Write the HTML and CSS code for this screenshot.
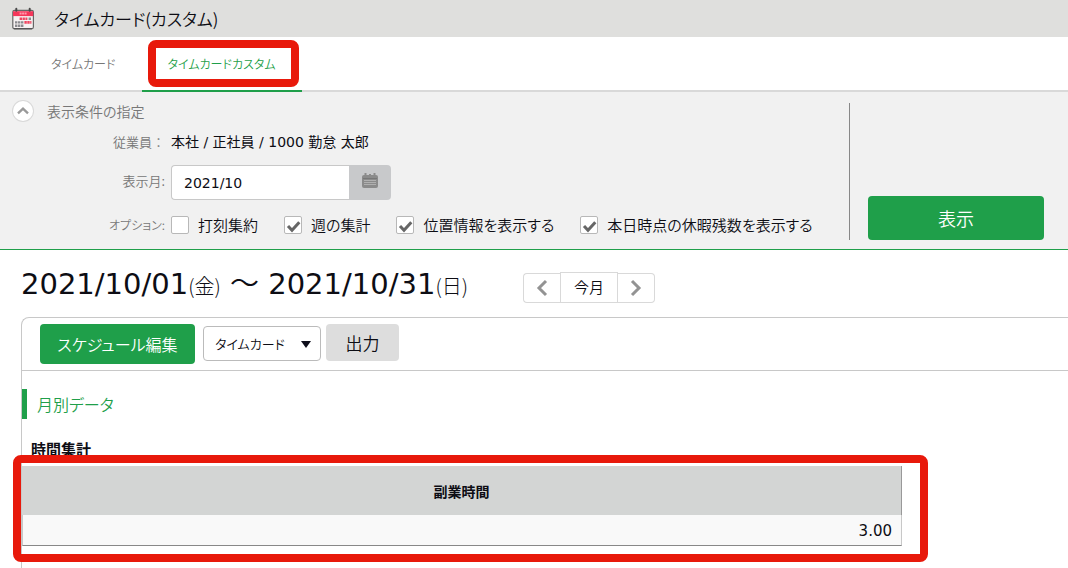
FILE: index.html
```html
<!DOCTYPE html>
<html lang="ja">
<head>
<meta charset="utf-8">
<meta name="viewport" content="width=device-width, initial-scale=1">
<title>タイムカード(カスタム)</title>
<link rel="stylesheet" href="styles.css">
</head>
<body>
<header class="page-header">
  <svg class="page-icon" viewBox="0 0 24 24" width="24" height="24" aria-hidden="true">
    <rect x="1.8" y="3.3" width="20.6" height="18.6" rx="1.8" fill="#f6f1f1" stroke="#666" stroke-width="1.2"/>
    <path d="M2 4.2h20.2v4.9H2z" fill="#f5365a"/>
    <path d="M8.6 6.5h7" stroke="#ff9aac" stroke-width="2" stroke-dasharray="2 .5"/>
    <path d="M5.3 1.8v2M18.7 1.8v2" stroke="#4a4a4a" stroke-width="2" stroke-linecap="round"/>
    <path d="M8.6 11.8h7.8M13.4 15.4h7" stroke="#ef4560" stroke-width="2.6" stroke-dasharray="2.4 .5"/>
    <path d="M17.6 11.8h2.4M4 15.4h8.4M4 18.8h8.4" stroke="#8a8a8e" stroke-width="2.4" stroke-dasharray="2.4 .6"/>
    <path d="M3 21.6h18" stroke="#555" stroke-width="1.2"/>
  </svg>
  <h1 class="page-title">タイムカード(カスタム)</h1>
</header>

<nav class="tabs">
  <a class="tab" href="#timecard">タイムカード</a>
  <a class="tab tab-active" href="#custom" aria-current="page">タイムカードカスタム</a>
</nav>

<form class="filters">
  <div class="conditions">
    <div class="conditions-head">
      <button class="collapse" type="button" aria-label="折りたたむ">
        <svg viewBox="0 0 20 20" width="20" height="20"><path d="M5 12.3l5-4.6 5 4.6" fill="none" stroke="#999" stroke-width="2.4"/></svg>
      </button>
      <h2 class="conditions-title">表示条件の指定</h2>
    </div>
    <div class="fields">
      <span class="field-label label-wide">従業員：</span>
      <span class="employee">本社 / 正社員 / 1000 勤怠 太郎</span>
      <label class="field-label label-month" for="month">表示月:</label>
      <div class="month">
        <input class="month-input" id="month" type="text" value="2021/10">
        <button class="month-button" type="button" aria-label="カレンダー">
          <svg viewBox="0 0 18 16" width="18" height="16">
            <path d="M3 2h12a2 2 0 0 1 2 2v9a2 2 0 0 1-2 2H3a2 2 0 0 1-2-2V4a2 2 0 0 1 2-2z" fill="#8b8b8b"/>
            <path d="M4.5 0v3M9 1v2M13.5 0v3" stroke="#8b8b8b" stroke-width="2"/>
            <path d="M2 5.5h14" stroke="#777" stroke-width="1"/>
            <path d="M3 7.5h12M3 9.5h12M3 11.5h12" stroke="#b0b0b0" stroke-width="1"/>
          </svg>
        </button>
      </div>
      <span class="field-label label-kana">オプション:</span>
      <div class="options">
        <label class="option"><span class="check"><input class="check-box" type="checkbox"><svg class="check-mark" viewBox="0 0 18 18"><path d="M4 10l4 4.3 7.3-8"/></svg></span>打刻集約</label>
        <label class="option"><span class="check"><input class="check-box" type="checkbox" checked><svg class="check-mark" viewBox="0 0 18 18"><path d="M4 10l4 4.3 7.3-8"/></svg></span>週の集計</label>
        <label class="option"><span class="check"><input class="check-box" type="checkbox" checked><svg class="check-mark" viewBox="0 0 18 18"><path d="M4 10l4 4.3 7.3-8"/></svg></span>位置情報を表示する</label>
        <label class="option"><span class="check"><input class="check-box" type="checkbox" checked><svg class="check-mark" viewBox="0 0 18 18"><path d="M4 10l4 4.3 7.3-8"/></svg></span>本日時点の休暇残数を表示する</label>
      </div>
    </div>
  </div>
  <div class="submit-area">
    <button class="button button-show" type="button">表示</button>
  </div>
</form>

<main class="content">
  <div class="period">
    <h2 class="period-title">2021/10/01<small class="weekday">(金)</small> <span class="tilde">～</span> 2021/10/31<small class="weekday">(日)</small></h2>
    <div class="pager">
      <button class="pager-button pager-prev" type="button" aria-label="前月"><svg viewBox="0 0 12 18" width="12" height="18"><path d="M10 2L3 9l7 7"/></svg></button>
      <button class="pager-button pager-now" type="button">今月</button>
      <button class="pager-button pager-next" type="button" aria-label="翌月"><svg viewBox="0 0 12 18" width="12" height="18"><path d="M2 2l7 7-7 7"/></svg></button>
    </div>
  </div>

  <section class="panel">
    <div class="toolbar">
      <button class="button button-schedule" type="button">スケジュール編集</button>
      <div class="select-wrap">
        <select class="select" aria-label="出力対象"><option>タイムカード</option></select>
        <svg class="select-arrow" viewBox="0 0 10 8" width="10" height="8" aria-hidden="true"><path d="M0 1h10L5 8z" fill="#0d0d1a"/></svg>
      </div>
      <button class="button button-output" type="button">出力</button>
    </div>
    <h2 class="section-title">月別データ</h2>
    <h3 class="table-title">時間集計</h3>
    <div class="table-wrap">
      <table class="totals">
        <thead><tr><th scope="col">副業時間</th></tr></thead>
        <tbody><tr><td>3.00</td></tr></tbody>
      </table>
    </div>
  </section>
</main>
</body>
</html>
```

FILE: styles.css
```css
* {
  box-sizing: border-box;
}

body {
  margin: 0;
  min-height: 100vh;
  display: flex;
  flex-direction: column;
  background: #fff;
  color: #0d0d14;
  font-family: "Noto Sans CJK JP", sans-serif;
  font-size: 14px;
  font-weight: 350;
  font-feature-settings: "palt";
  line-height: 20px;
}

h1, h2, h3 {
  margin: 0;
  font-weight: inherit;
}

button, input, select {
  margin: 0;
  padding: 0;
  border: 0;
  color: inherit;
  font: inherit;
  font-feature-settings: inherit;
}

svg {
  display: block;
}

.page-header {
  display: flex;
  align-items: center;
  gap: 19px;
  height: 37px;
  padding: 0 11px;
  background: #dfdfdd;
}

.page-title {
  font-size: 17px;
  line-height: 36px;
}

.tabs {
  display: flex;
  padding-left: 25px;
  border-bottom: 2px solid #d9d9d9;
}

.tab {
  position: relative;
  padding: 16px 26px;
  margin-bottom: -2px;
  border-bottom: 2px solid transparent;
  color: #777;
  font-size: 12px;
  line-height: 21px;
  text-decoration: none;
}

.tab-active {
  border-bottom-color: #1f9f4a;
  color: #1f9f4a;
}

.tab-active::after,
.table-wrap::after {
  content: "";
  position: absolute;
  border: 8px solid #e8190b;
  border-radius: 8px;
  pointer-events: none;
}

.tab-active::after {
  inset: 3px 3px 3px 6px;
}

.filters {
  display: flex;
  padding: 9px 24px 9px 13px;
  background: #f1f1f1;
  border-bottom: 1px solid #1f9f4a;
}

.conditions {
  flex: 1;
}

.conditions-head {
  display: flex;
  align-items: center;
  gap: 14px;
}

.collapse {
  width: 20px;
  height: 20px;
  border-radius: 50%;
  background: #fff;
  box-shadow: 0 0 0 1px #d9d9d9;
}

.conditions-title {
  color: #777;
  font-size: 14px;
}

.fields {
  display: grid;
  grid-template-columns: 152px 1fr;
  column-gap: 6px;
  align-items: center;
  padding: 11px 0 5px;
}

.field-label {
  color: #777;
  font-size: 13px;
  text-align: right;
}

.label-wide {
  font-feature-settings: normal;
}

.label-month {
  padding-bottom: 5px;
}

.label-kana {
  font-size: 12px;
}

.employee {
  font-family: "DejaVu Sans", "Noto Sans CJK JP", sans-serif;
  font-weight: 400;
}

.month {
  display: flex;
  height: 35px;
  margin: 13px 0 15px;
}

.month-input {
  width: 178px;
  padding-left: 12px;
  border: 1px solid #c8c8c8;
  border-right: 0;
  border-radius: 4px 0 0 4px;
  background: #fff;
  font-family: "DejaVu Sans", sans-serif;
  font-weight: 400;
}

.month-button {
  display: grid;
  place-items: center;
  width: 42px;
  padding-bottom: 3px;
  border-radius: 0 4px 4px 0;
  background: #c8c9cb;
}

.options {
  display: flex;
  gap: 26px;
}

.option {
  display: flex;
  align-items: center;
  gap: 9px;
  font-size: 15px;
  white-space: nowrap;
}

.check {
  display: grid;
}

.check-box {
  grid-area: 1 / 1;
  width: 18px;
  height: 18px;
  appearance: none;
  border: 1px solid #b8b8b8;
  border-radius: 2px;
  background: #fff;
}

.check-mark {
  grid-area: 1 / 1;
  width: 18px;
  height: 18px;
  fill: none;
  stroke: #666;
  stroke-width: 3;
  pointer-events: none;
  visibility: hidden;
}

.check-box:checked + .check-mark {
  visibility: visible;
}

.submit-area {
  display: flex;
  align-items: flex-end;
  margin-top: 2px;
  padding-left: 18px;
  border-left: 1px solid #888;
}

.button {
  border-radius: 4px;
  text-align: center;
}

.button-show {
  width: 176px;
  height: 44px;
  background: #1f9f4a;
  color: #fff;
  font-size: 18px;
}

.content {
  flex: 1;
  display: flex;
  flex-direction: column;
  padding-left: 21px;
}

.period {
  display: flex;
  align-items: center;
  gap: 55px;
  padding: 12px 0;
}

.period-title {
  font-family: "DejaVu Sans", "Noto Sans CJK JP", sans-serif;
  font-size: 29px;
  font-weight: 400;
  line-height: 39px;
  white-space: nowrap;
}

.weekday {
  font-family: "Noto Sans CJK JP", sans-serif;
  font-size: 20px;
  font-weight: 300;
}

.tilde {
  font-family: "Noto Sans CJK JP", sans-serif;
  font-weight: 350;
}

.pager {
  display: flex;
  align-items: flex-end;
  margin-top: 7px;
}

.pager-button {
  display: grid;
  place-items: center;
  width: 37px;
  height: 30px;
  border: 1px solid #d9d9d9;
  background: #fff;
  fill: none;
  stroke: #939393;
  stroke-width: 3;
}

.pager-prev {
  border-right: 0;
  border-radius: 4px 0 0 4px;
}

.pager-now {
  width: 58px;
  height: 31px;
  font-size: 15px;
}

.pager-next {
  border-left: 0;
  border-radius: 0 4px 4px 0;
}

.panel {
  flex: 1;
  border: 1px solid #c8c8c8;
  border-width: 1px 0 0 1px;
  border-radius: 8px 0 0 0;
}

.toolbar {
  display: flex;
  align-items: flex-start;
  padding: 6px 18px;
  border-bottom: 1px solid #c8c8c8;
}

.button-schedule {
  width: 155px;
  height: 40px;
  margin-right: 8px;
  background: #1f9f4a;
  color: #fff;
  font-size: 16px;
}

.select-wrap {
  display: grid;
  align-items: center;
  margin: 2px 5px 0 0;
}

.select {
  grid-area: 1 / 1;
  width: 118px;
  height: 35px;
  padding-left: 11px;
  appearance: none;
  border: 1px solid #bbb;
  border-radius: 4px;
  background: #fff;
  font-size: 13px;
}

.select-arrow {
  grid-area: 1 / 1;
  justify-self: end;
  margin-right: 10px;
  pointer-events: none;
}

.button-output {
  width: 73px;
  height: 37px;
  background: #ddd;
  font-size: 17px;
}

.section-title {
  margin-top: 18px;
  padding-left: 10px;
  border-left: 5px solid #1f9f4a;
  color: #1f9f4a;
  font-size: 16px;
  line-height: 30px;
}

.table-title {
  margin: 20px 0 7px;
  padding-left: 9px;
  font-size: 15px;
  font-weight: 700;
}

.table-wrap {
  position: relative;
  max-width: 880px;
}

.table-wrap::after {
  inset: -11px -26px -16px -9px;
}

.totals {
  width: 100%;
  border-collapse: separate;
  border-spacing: 0;
}

.totals th {
  height: 49px;
  padding: 0;
  border-right: 1px solid #999;
  background: #d3d5d4;
  font-size: 14px;
  font-weight: 700;
}

.totals td {
  height: 31px;
  padding: 2px 9px 0 0;
  border: 1px solid #c8c8c8;
  border-width: 0 1px 1px;
  border-bottom-color: #888;
  background: #f9f9f9;
  font-family: "DejaVu Sans", sans-serif;
  font-size: 15px;
  font-weight: 400;
  text-align: right;
}
```
